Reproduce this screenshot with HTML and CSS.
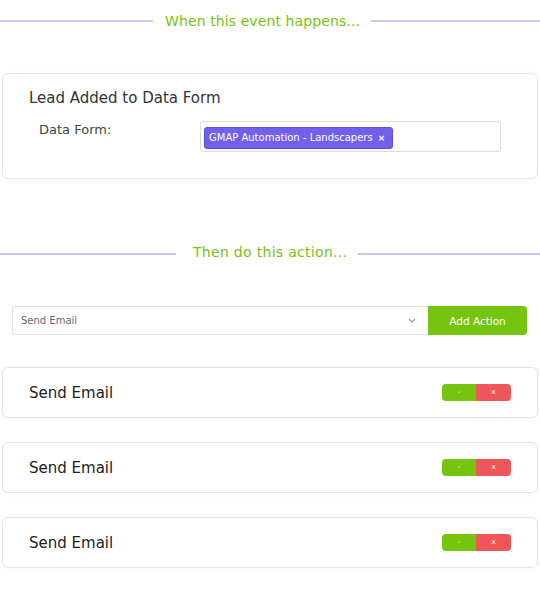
FILE: index.html
```html
<!DOCTYPE html>
<html>
<head>
<meta charset="utf-8">
<link rel="stylesheet" href="styles.css">
</head>
<body>
<div class="page">
  <div class="divider divider-first">
    <span class="line line-left"></span>
    <span class="divider-text">When this event happens...</span>
    <span class="line"></span>
  </div>

  <div class="card trigger-card">
    <div class="trigger-title">Lead Added to Data Form</div>
    <div class="field-row">
      <div class="field-label">Data Form:</div>
      <div class="tag-input">
        <span class="tag">GMAP Automation - Landscapers <span class="tag-x">×</span></span>
      </div>
    </div>
  </div>

  <div class="divider divider-second">
    <span class="line line-left"></span>
    <span class="divider-text">Then do this action...</span>
    <span class="line"></span>
  </div>

  <div class="action-row">
    <div class="select">
      <span class="select-text">Send Email</span>
      <svg class="chevron" width="8" height="5" viewBox="0 0 8 5"><polyline points="1,1 4,4 7,1" fill="none" stroke="#999" stroke-width="1.2"/></svg>
    </div>
    <button class="add-btn">Add Action</button>
  </div>

  <div class="actions">
    <div class="card action-card">
      <span class="action-name">Send Email</span>
      <span class="btn-group"><span class="btn-min">-</span><span class="btn-del">x</span></span>
    </div>
    <div class="card action-card">
      <span class="action-name">Send Email</span>
      <span class="btn-group"><span class="btn-min">-</span><span class="btn-del">x</span></span>
    </div>
    <div class="card action-card">
      <span class="action-name">Send Email</span>
      <span class="btn-group"><span class="btn-min">-</span><span class="btn-del">x</span></span>
    </div>
  </div>
</div>
</body>
</html>
```

FILE: styles.css
```css
* { box-sizing: border-box; }
html, body { margin: 0; padding: 0; background: #ffffff; }
body {
  font-family: "DejaVu Sans", "Open Sans", sans-serif;
  color: #333;
  width: 540px;
  height: 600px;
  overflow: hidden;
}
.page { display: flex; flex-direction: column; }

.divider {
  display: flex;
  align-items: center;
  height: 24px;
}
.divider-first { margin-top: 9px; }
.divider-second { margin-top: 63px; }
.line { flex: 1; height: 2px; background: #cdc8fa; }
.divider-first .line-left { flex: 0 0 153px; }
.divider-second .line-left { flex: 0 0 176px; }
.divider-text {
  color: #74c410;
  font-size: 14px;
  letter-spacing: 0.1px;
  padding: 0 11px 0 12px;
  line-height: 24px;
}
.divider-second .divider-text { padding: 0 11px 0 17px; margin-top: -4px; letter-spacing: 0.3px; }

.card {
  background: #fff;
  border: 1px solid #e4e4e4;
  border-radius: 6px;
  margin: 0 2px;
  box-shadow: 0 1px 8px rgba(0,0,0,0.03);
}

.trigger-card {
  margin-top: 40px;
  padding: 14px 26px 26px 26px;
  height: 106px;
}
.trigger-title {
  font-size: 15px;
  line-height: 20px;
  color: #333;
}
.field-row {
  display: flex;
  margin-top: 13px;
}
.field-label {
  width: 171px;
  padding-left: 10px;
  padding-top: 1px;
  font-size: 13px;
  color: #444;
}
.tag-input {
  width: 301px;
  height: 31px;
  border: 1px solid #dcdcdc;
  border-radius: 3px;
  padding: 4px 3px;
}
.tag {
  display: inline-flex;
  align-items: center;
  height: 22px;
  padding: 0 7px 0 4px;
  background: #7060ee;
  border: 1px solid #5c4fd9;
  color: #fff;
  font-size: 10px;
  border-radius: 3px;
  white-space: nowrap;
}
.tag-x { margin-left: 5px; font-size: 9px; font-weight: bold; }

.action-row {
  display: flex;
  margin: 40px 13px 0 12px;
  height: 29px;
}
.select {
  flex: 1;
  display: flex;
  align-items: center;
  justify-content: space-between;
  border: 1px solid #e2e2e2;
  border-right: none;
  border-radius: 3px 0 0 3px;
  padding: 0 12px 0 8px;
}
.select-text { font-size: 10px; color: #666; }
.chevron { display: block; }
.add-btn {
  width: 99px;
  border: none;
  background: #74c410;
  color: #fff;
  font-family: inherit;
  font-size: 10.5px;
  border-radius: 0 4px 4px 0;
  padding: 0;
}

.actions {
  display: flex;
  flex-direction: column;
  gap: 24px;
  margin-top: 32px;
}
.action-card {
  height: 51px;
  display: flex;
  align-items: center;
  justify-content: space-between;
  padding: 0 26px;
}
.action-name { font-size: 15px; color: #222; }
.btn-group { display: flex; height: 17px; border-radius: 4px; overflow: hidden; margin-top: -1px; }
.btn-min, .btn-del {
  width: 34px;
  display: flex;
  align-items: center;
  justify-content: center;
  color: #fff;
  font-size: 7px;
}
.btn-min { background: #74c410; }
.btn-del { background: #ee575a; width: 35px; }
```
